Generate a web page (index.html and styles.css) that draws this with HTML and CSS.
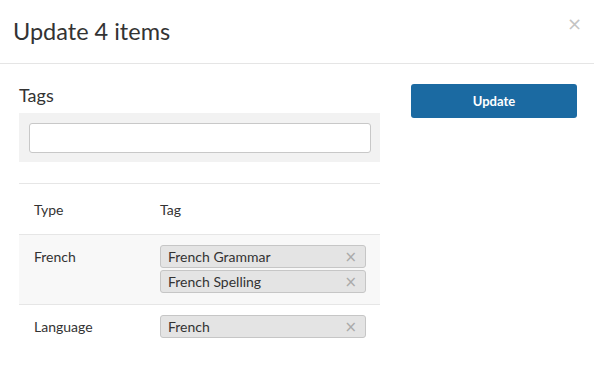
FILE: index.html
```html
<!DOCTYPE html>
<html lang="en">
<head>
  <meta charset="UTF-8" />
  <title>Update 4 items</title>
  <link rel="stylesheet" href="styles.css">
</head>
<body>
  <div class="modal">
    <div class="modal-header">
      <h3>Update 4 items</h3>
      <button class="close" type="button">&times;</button>
    </div>

    <div class="modal-body">
      <div class="left-col">
        <h4>Tags</h4>
        <div class="tag-input-box">
          <input type="text" />
        </div>

        <table class="tag-table">
          <thead>
            <tr>
              <th class="col-type">Type</th>
              <th>Tag</th>
            </tr>
          </thead>
          <tbody>
            <tr class="striped">
              <td class="col-type">French</td>
              <td>
                <div class="chip"><span>French Grammar</span><span class="chip-x">&times;</span></div>
                <div class="chip"><span>French Spelling</span><span class="chip-x">&times;</span></div>
              </td>
            </tr>
            <tr>
              <td class="col-type">Language</td>
              <td>
                <div class="chip"><span>French</span><span class="chip-x">&times;</span></div>
              </td>
            </tr>
          </tbody>
        </table>
      </div>

      <div class="right-col">
        <button class="btn-primary" type="button">Update</button>
      </div>
    </div>
  </div>
</body>
</html>
```

FILE: styles.css
```css
body {
  font-family: Lato, 'Open Sans', sans-serif;
  margin: 0;
  padding: 0;
  background-color: white;
  color: #333;
}

.modal {
  width: 594px;
  height: 390px;
  background-color: white;
}

.modal-header {
  display: flex;
  justify-content: space-between;
  align-items: flex-start;
  height: 64px;
  box-sizing: border-box;
  padding: 0 12px 0 13px;
  border-bottom: 1px solid #e5e5e5;
}

.modal-header h3 {
  margin: 0;
  padding-top: 17px;
  font-size: 23.5px;
  font-weight: 400;
  line-height: 28px;
}

.close {
  margin-top: 13px;
  padding: 0;
  border: none;
  background: none;
  color: #c4c4c4;
  font-size: 18px;
  line-height: 22px;
  font-family: 'DejaVu Sans', sans-serif;
  cursor: pointer;
}

.modal-body {
  display: flex;
  gap: 31px;
  padding: 20px 17px 0 19px;
}

.left-col {
  width: 361px;
}

.left-col h4 {
  margin: 0 0 7px 0;
  font-size: 18px;
  font-weight: 400;
  line-height: 22px;
}

.tag-input-box {
  background-color: #f2f2f2;
  padding: 10px 9px 9px 10px;
}

.tag-input-box input {
  display: block;
  width: 100%;
  box-sizing: border-box;
  height: 30px;
  border: 1px solid #c8c8c8;
  border-radius: 3px;
  background: white;
}

.tag-table {
  width: 100%;
  margin-top: 21px;
  border-collapse: collapse;
  font-size: 14px;
}

.tag-table th {
  text-align: left;
  font-weight: 400;
  height: 50px;
  padding: 0;
  border-top: 1px solid #e6e6e6;
}

.tag-table td {
  vertical-align: top;
  padding: 10px 0 11px 0;
  border-top: 1px solid #e6e6e6;
}

.tag-table .col-type {
  width: 126px;
  padding-left: 15px;
}

.tag-table td.col-type {
  padding-top: 13px;
}

.striped {
  background-color: #f8f8f8;
}

.chip {
  display: flex;
  justify-content: space-between;
  align-items: center;
  width: 206px;
  height: 23px;
  box-sizing: border-box;
  margin-bottom: 2px;
  padding: 0 8px 0 7px;
  background-color: #e4e4e4;
  border: 1px solid #c6c6c6;
  border-radius: 3px;
  font-size: 14px;
}

.chip:last-child {
  margin-bottom: 0;
}

.chip-x {
  color: #aaa;
  font-family: 'DejaVu Sans', sans-serif;
  font-size: 15px;
}

.right-col {
  width: 166px;
}

.btn-primary {
  width: 100%;
  height: 34px;
  border: none;
  border-radius: 3px;
  background-color: #1b6aa2;
  color: white;
  font-family: Lato, sans-serif;
  font-size: 13px;
  font-weight: 700;
  cursor: pointer;
}
```
